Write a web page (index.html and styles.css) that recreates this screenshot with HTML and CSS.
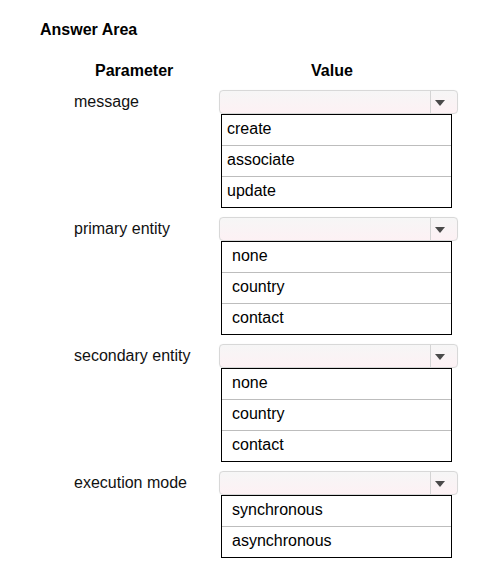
FILE: index.html
```html
<!DOCTYPE html>
<html>
<head>
<meta charset="utf-8">
<link rel="stylesheet" href="styles.css">
</head>
<body>
<div class="page">
  <div class="title">Answer Area</div>
  <div class="head">
    <div class="head-param">Parameter</div>
    <div class="head-value">Value</div>
  </div>

  <div class="group">
    <div class="label">message</div>
    <div class="value">
      <div class="select"><div class="field"></div><div class="btn"><span class="arrow"></span></div></div>
      <div class="list list-tight">
        <div class="item">create</div>
        <div class="item">associate</div>
        <div class="item">update</div>
      </div>
    </div>
  </div>

  <div class="group">
    <div class="label">primary entity</div>
    <div class="value">
      <div class="select"><div class="field"></div><div class="btn"><span class="arrow"></span></div></div>
      <div class="list">
        <div class="item">none</div>
        <div class="item">country</div>
        <div class="item">contact</div>
      </div>
    </div>
  </div>

  <div class="group">
    <div class="label">secondary entity</div>
    <div class="value">
      <div class="select"><div class="field"></div><div class="btn"><span class="arrow"></span></div></div>
      <div class="list">
        <div class="item">none</div>
        <div class="item">country</div>
        <div class="item">contact</div>
      </div>
    </div>
  </div>

  <div class="group">
    <div class="label">execution mode</div>
    <div class="value">
      <div class="select"><div class="field"></div><div class="btn"><span class="arrow"></span></div></div>
      <div class="list">
        <div class="item">synchronous</div>
        <div class="item">asynchronous</div>
      </div>
    </div>
  </div>
</div>
</body>
</html>
```

FILE: styles.css
```css
html, body {
  margin: 0;
  padding: 0;
  background: #ffffff;
}

body {
  font-family: Arial, "Liberation Sans", sans-serif;
  font-size: 16px;
  line-height: 18px;
  color: #000;
}

.page {
  padding: 21px 0 0 0;
  width: 485px;
  box-sizing: border-box;
}

.title {
  font-weight: bold;
  padding-left: 40px;
  margin-bottom: 23px;
}

.head {
  display: grid;
  grid-template-columns: 219px 1fr;
  font-weight: bold;
  margin-bottom: 10px;
}

.head-param {
  padding-left: 95px;
}

.head-value {
  padding-left: 92px;
}

.group {
  display: grid;
  grid-template-columns: 219px 239px;
  margin-bottom: 9px;
}

.label {
  padding-left: 74px;
  padding-top: 3px;
  color: #111;
}

.value {
  display: flex;
  flex-direction: column;
}

.select {
  display: flex;
  height: 24px;
  box-sizing: border-box;
  border: 1px solid #d8d8d8;
  border-radius: 4px;
  background: linear-gradient(#f6f6f6, #fdf1f4);
  box-shadow: 0 0 1px rgba(0, 0, 0, 0.08);
}

.field {
  flex: 1;
  border-right: 1px solid #d4d4d4;
}

.btn {
  width: 26px;
  display: flex;
  align-items: center;
  padding-left: 4px;
  box-sizing: border-box;
}

.arrow {
  width: 0;
  height: 0;
  border-left: 5px solid transparent;
  border-right: 5px solid transparent;
  border-top: 6px solid #4a4a4a;
  margin-top: 1px;
}

.list {
  margin-left: 2px;
  width: 231px;
  box-sizing: border-box;
  border: 1px solid #000;
}

.item {
  height: 30px;
  line-height: 28px;
  padding-left: 10px;
  border-top: 1px solid #bdbdbd;
  box-sizing: content-box;
}

.item:first-child {
  border-top: none;
}

.list-tight .item {
  padding-left: 5px;
}
```
